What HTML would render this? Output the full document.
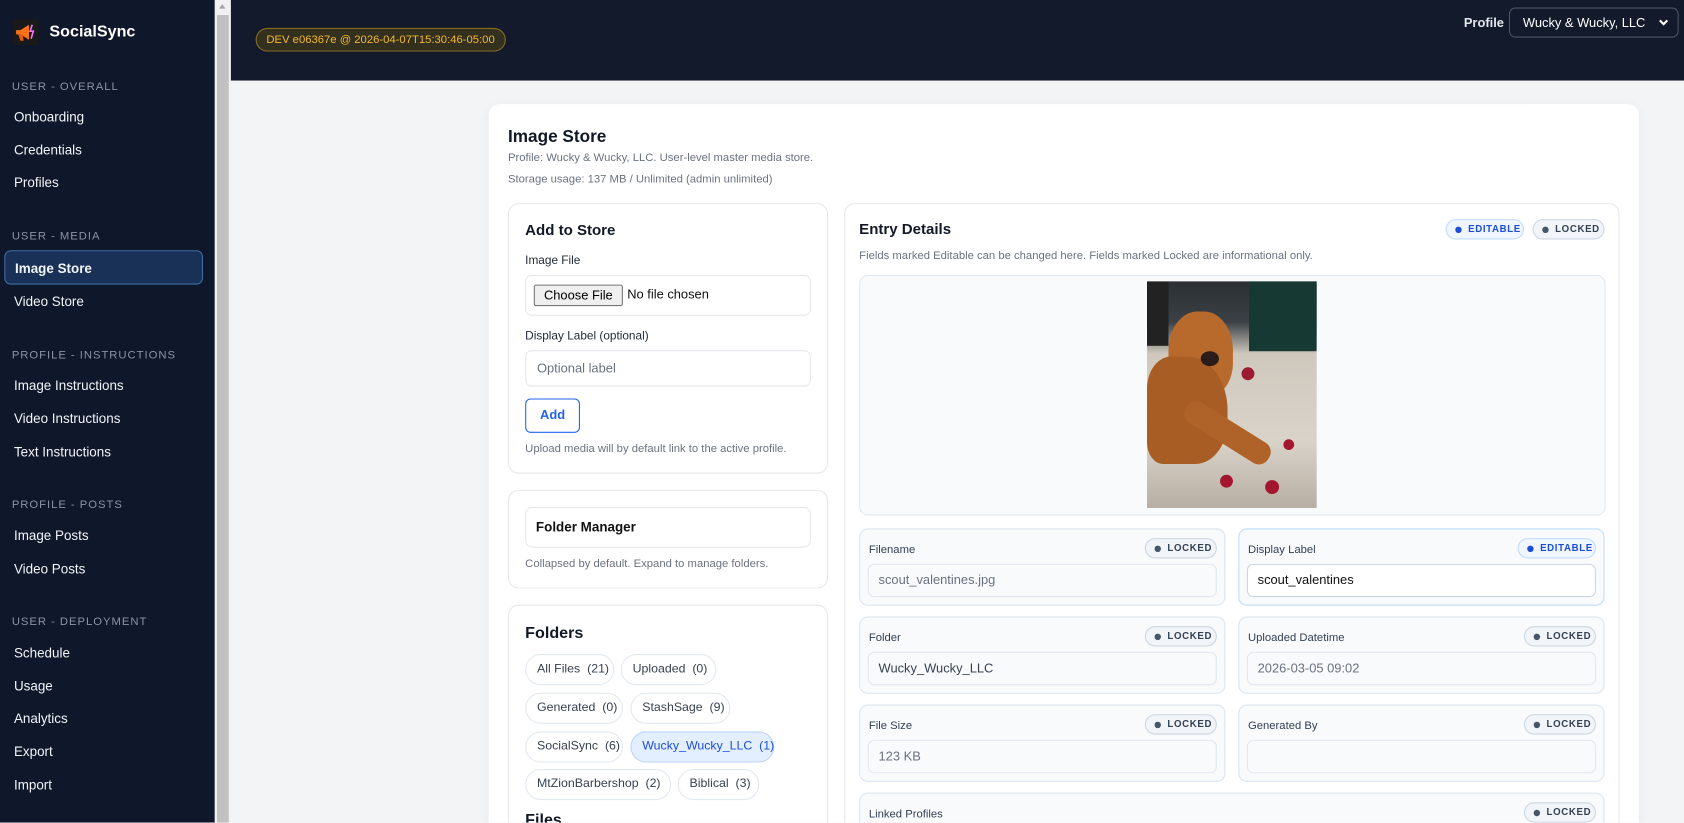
<!DOCTYPE html>
<html><head><meta charset="utf-8"><style>
*{box-sizing:border-box;margin:0;padding:0}
html,body{width:1684px;height:823px;overflow:hidden;background:#f3f4f6}
#w{position:absolute;left:0;top:0;width:1568px;height:766px;overflow:hidden;transform:scale(1.07398);transform-origin:0 0;font-family:"Liberation Sans",sans-serif;background:#f3f4f6}
.a{position:absolute}
#sb{left:0;top:0;width:200px;height:766px;background:#0f172a}
.sh{position:absolute;left:11px;font-size:10.5px;color:#8b93a3;letter-spacing:.9px}
.si{position:absolute;left:13px;font-size:12.5px;color:#f1f5f9}
#scr{left:200px;top:0;width:15px;height:766px;background:#f1f1f1}
#hd{left:215px;top:0;width:1353px;height:75px;background:#121a2b}
.card{background:#fff;border:1px solid #e5e7eb;border-radius:10px;position:absolute}
.t{position:absolute;white-space:nowrap}
.g{color:#6b7280;font-size:10.5px}
.pill{position:absolute;height:29px;border:1px solid #e2e8f0;border-radius:15px;font-size:11.5px;color:#374151;line-height:27px;padding-left:10px;white-space:nowrap;background:#fff}
.fc{position:absolute;width:341px;height:72px;background:#f8fafc;border:1px solid #dbe3ee;border-radius:8px}
.fc .l{position:absolute;left:8px;top:13px;font-size:10.5px;color:#334155}
.fc .in{position:absolute;left:7px;top:32px;width:325px;height:31px;border:1px solid #e2e8f0;border-radius:6px;background:#f8fafc;font-size:12px;color:#6b7280;line-height:29px;padding-left:9px}
.bd{position:absolute;height:19px;border-radius:10px;font-size:9px;font-weight:bold;letter-spacing:.6px;line-height:17px;padding-left:20px;white-space:nowrap}
.bd:before{content:"";position:absolute;left:8px;top:6px;width:6px;height:6px;border-radius:3px}
.lk{background:#f1f5f9;border:1px solid #cbd5e1;color:#334155;width:67px}
.lk:before{background:#475569}
.ed{background:#eff6ff;border:1px solid #bfdbfe;color:#1d4ed8;width:73px}
.ed:before{background:#1d4ed8}
.fc .bd{right:7px;top:8px}
</style></head><body><div id="w">
<div id="sb" class="a">
 <div class="a" style="left:12px;top:18px;width:24px;height:24px;background:#1a1a1a;border-radius:2px">
  <svg class="a" style="left:0;top:0" width="24" height="24" viewBox="0 0 24 24"><path d="M3 10h4l8-5v14l-8-5H3z" fill="#f97316"/><path d="M5 14l2 6h3l-1-6z" fill="#ea580c"/><path d="M18 5l-2 6h3l-2 7" stroke="#e879f9" stroke-width="1.5" fill="none"/></svg>
 </div>
 <div class="t" style="left:46px;top:21px;font-size:15px;font-weight:bold;color:#fff">SocialSync</div>
 <div class="sh" style="top:75px">USER - OVERALL</div>
 <div class="si" style="top:102px">Onboarding</div><div class="si" style="top:133px">Credentials</div><div class="si" style="top:163px">Profiles</div>
 <div class="sh" style="top:214px">USER - MEDIA</div>
 <div class="a" style="left:4px;top:233px;width:185px;height:32px;background:#1a3157;border:1px solid #3d6ea8;border-radius:6px"></div>
 <div class="si" style="top:243px;left:14px;font-weight:bold">Image Store</div>
 <div class="si" style="top:274px">Video Store</div>
 <div class="sh" style="top:325px">PROFILE - INSTRUCTIONS</div>
 <div class="si" style="top:352px">Image Instructions</div><div class="si" style="top:383px">Video Instructions</div><div class="si" style="top:414px">Text Instructions</div>
 <div class="sh" style="top:464px">PROFILE - POSTS</div>
 <div class="si" style="top:492px">Image Posts</div><div class="si" style="top:523px">Video Posts</div>
 <div class="sh" style="top:573px">USER - DEPLOYMENT</div>
 <div class="si" style="top:601px">Schedule</div><div class="si" style="top:632px">Usage</div><div class="si" style="top:662px">Analytics</div><div class="si" style="top:693px">Export</div><div class="si" style="top:724px">Import</div>
</div>
<div id="scr" class="a"><div class="a" style="left:2px;top:14px;width:11px;height:752px;background:#c1c1c1"></div><div class="a" style="left:4px;top:4px;border-left:3.5px solid transparent;border-right:3.5px solid transparent;border-bottom:4px solid #a3a3a3"></div></div>
<div id="hd" class="a">
 <div class="t" style="left:23px;top:26px;height:22px;padding:0 9px;border:1px solid #8a6d1c;background:#33301f;border-radius:11px;color:#f5b82e;font-size:10.5px;line-height:20px">DEV e06367e @ 2026-04-07T15:30:46-05:00</div>
 <div class="t" style="left:1148px;top:14px;font-size:12px;font-weight:bold;color:#e5e7eb">Profile</div>
 <div class="a" style="left:1190px;top:7px;width:158px;height:28px;border:1px solid #4b5565;border-radius:6px;color:#fff;font-size:12px;line-height:26px;padding-left:12px">Wucky &amp; Wucky, LLC<svg class="a" style="right:8px;top:9px" width="10" height="8" viewBox="0 0 10 8"><path d="M1.5 2l3.5 3.5L8.5 2" stroke="#fff" stroke-width="2" fill="none"/></svg></div>
</div>
<div class="card" style="left:455px;top:97px;width:1071px;height:800px;border:none;box-shadow:0 2px 10px rgba(0,0,0,.05)"></div>
<div class="t" style="left:473px;top:119px;font-size:16px;font-weight:bold;color:#111827">Image Store</div>
<div class="t g" style="left:473px;top:141px">Profile: Wucky &amp; Wucky, LLC. User-level master media store.</div>
<div class="t g" style="left:473px;top:161px">Storage usage: 137 MB / Unlimited (admin unlimited)</div>

<div class="card" style="left:473px;top:189px;width:298px;height:252px"></div>
<div class="t" style="left:489px;top:206px;font-size:14px;font-weight:bold;color:#111827">Add to Store</div>
<div class="t" style="left:489px;top:237px;font-size:11px;color:#1f2937">Image File</div>
<div class="a" style="left:489px;top:256px;width:266px;height:38px;border:1px solid #e5e7eb;border-radius:6px"></div>
<div class="a" style="left:497px;top:265px;width:83px;height:20px;border:1px solid #767676;background:#efefef;border-radius:2px;font-size:12px;color:#000;line-height:18px;text-align:center">Choose File</div>
<div class="t" style="left:584px;top:267px;font-size:12px;color:#111">No file chosen</div>
<div class="t" style="left:489px;top:307px;font-size:11px;color:#1f2937">Display Label (optional)</div>
<div class="a" style="left:489px;top:326px;width:266px;height:34px;border:1px solid #e5e7eb;border-radius:6px;font-size:12px;color:#6b7280;line-height:32px;padding-left:10px">Optional label</div>
<div class="a" style="left:489px;top:371px;width:51px;height:32px;border:1.5px solid #2563eb;border-radius:5px;font-size:12px;font-weight:bold;color:#2563eb;line-height:29px;text-align:center">Add</div>
<div class="t g" style="left:489px;top:412px">Upload media will by default link to the active profile.</div>

<div class="card" style="left:473px;top:456px;width:298px;height:92px"></div>
<div class="a" style="left:489px;top:472px;width:266px;height:38px;border:1px solid #e5e7eb;border-radius:7px"></div>
<div class="t" style="left:499px;top:484px;font-size:12.5px;font-weight:bold;color:#111">Folder Manager</div>
<div class="t g" style="left:489px;top:519px">Collapsed by default. Expand to manage folders.</div>

<div class="card" style="left:473px;top:563px;width:298px;height:330px"></div>
<div class="t" style="left:489px;top:581px;font-size:15px;font-weight:bold;color:#111827">Folders</div>
<div class="pill" style="left:489px;top:609px;width:83px">All Files &nbsp;(21)</div>
<div class="pill" style="left:578px;top:609px;width:89px">Uploaded &nbsp;(0)</div>
<div class="pill" style="left:489px;top:645px;width:91px">Generated &nbsp;(0)</div>
<div class="pill" style="left:587px;top:645px;width:93px">StashSage &nbsp;(9)</div>
<div class="pill" style="left:489px;top:681px;width:91px">SocialSync &nbsp;(6)</div>
<div class="pill" style="left:587px;top:681px;width:134px;background:#e3eeff;border-color:#bcd4fb;color:#1d4ed8">Wucky_Wucky_LLC &nbsp;(1)</div>
<div class="pill" style="left:489px;top:716px;width:136px">MtZionBarbershop &nbsp;(2)</div>
<div class="pill" style="left:631px;top:716px;width:76px">Biblical &nbsp;(3)</div>
<div class="t" style="left:489px;top:755px;font-size:15px;font-weight:bold;color:#111827">Files</div>

<div class="card" style="left:786px;top:189px;width:722px;height:720px"></div>
<div class="t" style="left:800px;top:205px;font-size:14px;font-weight:bold;color:#111827">Entry Details</div>
<div class="bd ed" style="left:1346px;top:204px">EDITABLE</div>
<div class="bd lk" style="left:1427px;top:204px">LOCKED</div>
<div class="t g" style="left:800px;top:232px">Fields marked Editable can be changed here. Fields marked Locked are informational only.</div>
<div class="a" style="left:800px;top:256px;width:695px;height:224px;background:#f8fafc;border:1px solid #e2e8f0;border-radius:8px"></div>
<div class="a" style="left:1068px;top:262px;width:158px;height:211px;overflow:hidden;background:linear-gradient(180deg,#2a2f33 0,#3b4146 18%,#cfc8bd 32%,#d9d3ca 70%,#b7afa3 100%)">
 <div class="a" style="left:95px;top:0;width:63px;height:65px;background:#163a33"></div>
 <div class="a" style="left:0;top:0;width:20px;height:60px;background:#222"></div>
 <div class="a" style="left:20px;top:28px;width:60px;height:80px;border-radius:45% 45% 40% 40%;background:#b86a2c"></div>
 <div class="a" style="left:0;top:70px;width:75px;height:100px;border-radius:30% 50% 40% 20%;background:#a85d25"></div>
 <div class="a" style="left:30px;top:130px;width:90px;height:22px;border-radius:10px;background:#b06329;transform:rotate(32deg)"></div>
 <div class="a" style="left:50px;top:65px;width:17px;height:14px;border-radius:50%;background:#2a1d19"></div>
 <div class="a" style="left:88px;top:80px;width:12px;height:12px;border-radius:50%;background:#9c1b33"></div>
 <div class="a" style="left:110px;top:185px;width:13px;height:13px;border-radius:50%;background:#a3162e"></div>
 <div class="a" style="left:68px;top:180px;width:12px;height:12px;border-radius:50%;background:#a3162e"></div>
 <div class="a" style="left:127px;top:147px;width:10px;height:10px;border-radius:50%;background:#a3162e"></div>
</div>

<div class="fc" style="left:800px;top:492px"><div class="l">Filename</div><div class="bd lk">LOCKED</div><div class="in">scout_valentines.jpg</div></div>
<div class="fc" style="left:1153px;top:492px;border-color:#bfdbfe"><div class="l">Display Label</div><div class="bd ed">EDITABLE</div><div class="in" style="background:#fff;border-color:#cbd5e1;color:#111">scout_valentines</div></div>
<div class="fc" style="left:800px;top:574px"><div class="l">Folder</div><div class="bd lk">LOCKED</div><div class="in" style="color:#374151">Wucky_Wucky_LLC</div></div>
<div class="fc" style="left:1153px;top:574px"><div class="l">Uploaded Datetime</div><div class="bd lk">LOCKED</div><div class="in">2026-03-05 09:02</div></div>
<div class="fc" style="left:800px;top:656px"><div class="l">File Size</div><div class="bd lk">LOCKED</div><div class="in">123 KB</div></div>
<div class="fc" style="left:1153px;top:656px"><div class="l">Generated By</div><div class="bd lk">LOCKED</div><div class="in"></div></div>
<div class="fc" style="left:800px;top:738px;width:694px;height:120px"><div class="l">Linked Profiles</div><div class="bd lk">LOCKED</div></div>
</div></body></html>
